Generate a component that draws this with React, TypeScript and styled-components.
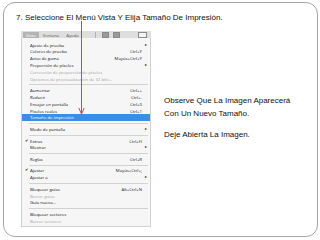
import React from "react";
import styled, { createGlobalStyle } from "styled-components";

const GlobalStyle = createGlobalStyle`
  html, body {
    margin: 0;
    padding: 0;
    background: #ffffff;
  }
  body {
    width: 320px;
    height: 240px;
    overflow: hidden;
    font-family: "Liberation Sans", Arial, sans-serif;
  }
`;

type Item = {
  label?: string;
  shortcut?: string;
  sub?: boolean;
  checked?: boolean;
  disabled?: boolean;
  active?: boolean;
  sep?: boolean;
};

const items: Item[] = [
  { label: "Ajuste de prueba", sub: true },
  { label: "Colores de prueba", shortcut: "Ctrl+Y" },
  { label: "Aviso de gama", shortcut: "Mayús+Ctrl+Y" },
  { label: "Proporción de píxeles", sub: true },
  { label: "Corrección de proporción de píxeles", disabled: true },
  { label: "Opciones de previsualización de 32 bits...", disabled: true },
  { sep: true },
  { label: "Aumentar", shortcut: "Ctrl++" },
  { label: "Reducir", shortcut: "Ctrl+-" },
  { label: "Encajar en pantalla", shortcut: "Ctrl+0" },
  { label: "Píxeles reales", shortcut: "Ctrl+1" },
  { label: "Tamaño de impresión", active: true },
  { sep: true },
  { label: "Modo de pantalla", sub: true },
  { sep: true },
  { label: "Extras", shortcut: "Ctrl+H", checked: true },
  { label: "Mostrar", sub: true },
  { sep: true },
  { label: "Reglas", shortcut: "Ctrl+R" },
  { sep: true },
  { label: "Ajustar", shortcut: "Mayús+Ctrl+;", checked: true },
  { label: "Ajustar a", sub: true },
  { sep: true },
  { label: "Bloquear guías", shortcut: "Alt+Ctrl+Ñ" },
  { label: "Borrar guías", disabled: true },
  { label: "Guía nueva..." },
  { sep: true },
  { label: "Bloquear sectores" },
  { label: "Borrar sectores", disabled: true },
];

export default function App() {
  return (
    <>
      <GlobalStyle />
      <Slide>
        <Title>7. Seleccione El Menú Vista Y Elija Tamaño De Impresión.</Title>
        <Body>
          <MenuShot>
            <MenuBar>
              <BarTab $active>Vista</BarTab>
              <BarTab>Ventana</BarTab>
              <BarTab>Ayuda</BarTab>
              <BarDivider />
              <BarIcon />
              <BarIcon />
              <BarSpacer />
              <BarIcon $wide />
            </MenuBar>
            <MenuPanel>
              {items.map((item, i) =>
                item.sep ? (
                  <Separator key={i} />
                ) : (
                  <Row key={i} $active={item.active} $disabled={item.disabled}>
                    <Check>{item.checked ? "✔" : ""}</Check>
                    <Label>{item.label}</Label>
                    <Shortcut>{item.shortcut}</Shortcut>
                    <SubArrow>{item.sub ? "▸" : ""}</SubArrow>
                  </Row>
                )
              )}
            </MenuPanel>
          </MenuShot>
          <Notes>
            <Para>
              Observe Que La Imagen Aparecerá
              <br />
              Con Un Nuevo Tamaño.
            </Para>
            <Para>Deje Abierta La Imagen.</Para>
          </Notes>
        </Body>
        <Arrow width="7" height="94" viewBox="0 0 7 94">
          <line x1="3.5" y1="0" x2="3.5" y2="92" stroke="#c0504d" strokeWidth="1" />
          <path d="M0.8 87 L3.5 93 L6.2 87" fill="none" stroke="#c0504d" strokeWidth="1" />
        </Arrow>
      </Slide>
    </>
  );
}

const Slide = styled.div`
  position: relative;
  box-sizing: border-box;
  margin: 2px 0 0 3px;
  width: 315px;
  height: 235px;
  border: 1px solid #a6a6a6;
  border-radius: 12px;
  display: flex;
  flex-direction: column;
`;

const Title = styled.div`
  padding: 10px 0 0 12px;
  font-size: 8px;
  line-height: 10px;
  color: #111;
  white-space: nowrap;
`;

const Body = styled.div`
  display: flex;
  align-items: flex-start;
  margin-top: 8px;
`;

const MenuShot = styled.div`
  margin-left: 17px;
  width: 130px;
  display: flex;
  flex-direction: column;
  font-family: "Open Sans", "Noto Sans", sans-serif;
  font-size: 4.3px;
`;

const MenuBar = styled.div`
  height: 7px;
  background: #dedede;
  display: flex;
  align-items: center;
  padding-left: 2px;
  color: #444;
`;

const BarTab = styled.div<{ $active?: boolean }>`
  height: 6px;
  line-height: 6px;
  padding: 0 3px;
  margin-right: 1px;
  background: ${(p) => (p.$active ? "#b4b4b4" : "transparent")};
  color: ${(p) => (p.$active ? "#fff" : "#555")};
`;

const BarDivider = styled.div`
  width: 1px;
  height: 6px;
  background: #b0b0b0;
  margin: 0 6px 0 12px;
`;

const BarIcon = styled.div<{ $wide?: boolean }>`
  width: ${(p) => (p.$wide ? 7 : 5)}px;
  height: 4px;
  margin-right: 4px;
  border: 1px solid #8a8a8a;
  background: ${(p) => (p.$wide ? "#f4f4f4" : "#9a9a9a")};
`;

const BarSpacer = styled.div`
  width: 14px;
`;

const MenuPanel = styled.div`
  height: 189px;
  box-sizing: border-box;
  padding-top: 3.6px;
  background: #f6f6f6;
  border: 1px solid #d2d2d2;
  border-top: none;
`;

const Row = styled.div<{ $active?: boolean; $disabled?: boolean }>`
  height: 6.8px;
  line-height: 6.8px;
  display: grid;
  grid-template-columns: 8px 1fr auto 8px;
  white-space: nowrap;
  background: ${(p) => (p.$active ? "#3b8ee6" : "transparent")};
  color: ${(p) => (p.$active ? "#ffffff" : p.$disabled ? "#a3a3a3" : "#111111")};
`;

const Check = styled.span`
  text-align: center;
  font-size: 4px;
`;

const Label = styled.span`
  overflow: hidden;
`;

const Shortcut = styled.span`
  text-align: right;
  color: #222;
`;

const SubArrow = styled.span`
  text-align: center;
  font-size: 4px;
  color: #222;
`;

const Separator = styled.div`
  height: 1px;
  background: #d2d2d2;
  margin: 1.9px 2px 1.9px 7px;
`;

const Notes = styled.div`
  margin: 64px 0 0 13px;
  font-size: 8px;
  line-height: 12.5px;
  color: #111;
`;

const Para = styled.p`
  margin: 0 0 9px;
`;

const Arrow = styled.svg`
  position: absolute;
  left: 74px;
  top: 18px;
`;
